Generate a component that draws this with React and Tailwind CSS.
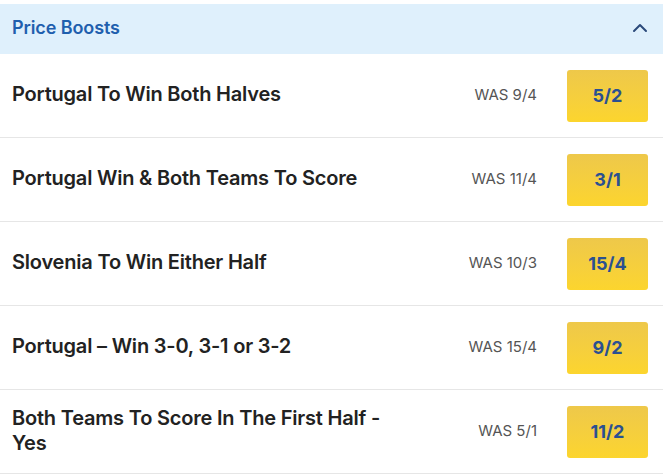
import React from "react";

const rows = [
  { title: ["Portugal To Win Both Halves"], was: "WAS 9/4", odds: "5/2" },
  { title: ["Portugal Win & Both Teams To Score"], was: "WAS 11/4", odds: "3/1" },
  { title: ["Slovenia To Win Either Half"], was: "WAS 10/3", odds: "15/4" },
  { title: ["Portugal – Win 3-0, 3-1 or 3-2"], was: "WAS 15/4", odds: "9/2" },
  { title: ["Both Teams To Score In The First Half -", "Yes"], was: "WAS 5/1", odds: "11/2" },
];

export default function App() {
  return (
    <div className="w-[663px] h-[474px] bg-white pt-[4px] overflow-hidden" style={{ fontFamily: "Inter, 'Noto Sans', sans-serif" }}>
      <div className="h-[50px] bg-[#dff0fc] flex items-center justify-between pl-[12px] pr-[15px] pb-[3px]">
        <span className="text-[18px] font-semibold text-[#1f5fae] tracking-[-0.1px]">Price Boosts</span>
        <svg width="16" height="10" viewBox="0 0 16 10" fill="none">
          <path d="M2 8L8 2L14 8" stroke="#2b4a7a" strokeWidth="2" strokeLinecap="round" strokeLinejoin="round" />
        </svg>
      </div>
      {rows.map((r, i) => (
        <div key={i} className="h-[84px] flex items-center border-b border-[#e6e6e6] pl-[12px] pr-[15px]">
          <div className="flex-1 text-[20px] font-semibold text-[#222] leading-[25px] tracking-[-0.2px] pb-[2px]">
            {r.title.map((t, j) => (
              <div key={j}>{t}</div>
            ))}
          </div>
          <div className="w-[110px] text-right pr-[30px] text-[15px] text-[#555] whitespace-nowrap">{r.was}</div>
          <div className="w-[81px] h-[52px] rounded-[3px] bg-gradient-to-b from-[#eec84a] to-[#fcd52d] flex items-center justify-center text-[18px] font-bold text-[#2b5091]">
            {r.odds}
          </div>
        </div>
      ))}
    </div>
  );
}
